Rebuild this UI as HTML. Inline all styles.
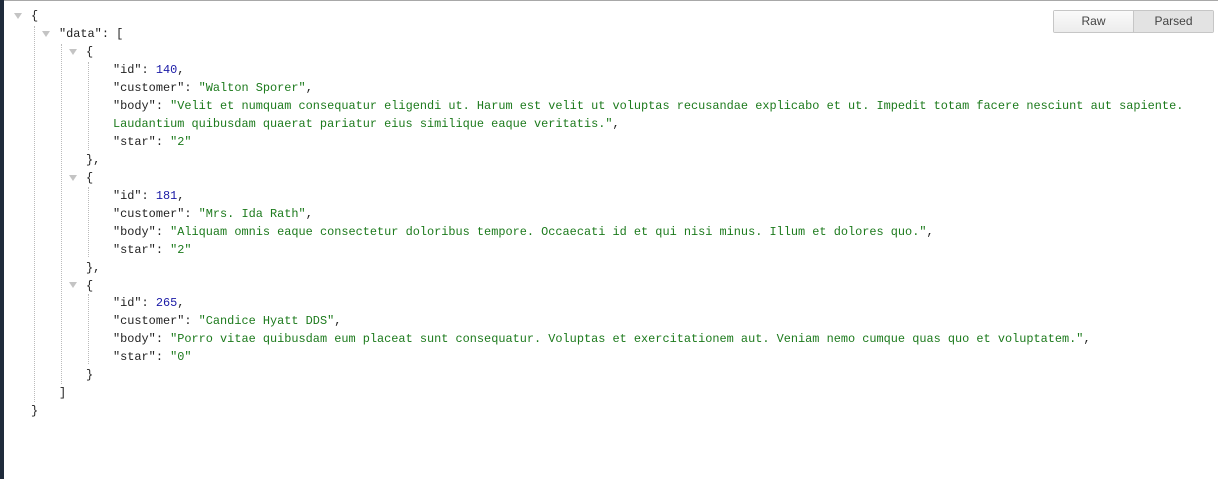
<!DOCTYPE html>
<html><head><style>
html,body{margin:0;padding:0;width:1218px;height:479px;overflow:hidden;background:#fff;position:relative}
#lb{position:absolute;left:0;top:0;width:4px;height:479px;background:#1f2b3b}
#tb{position:absolute;left:0;top:0;width:1218px;height:1px;background:#a8a8a8}
.l{position:absolute;font-family:"Liberation Mono",monospace;font-size:11.9px;color:#222;white-space:pre;line-height:18px;height:18px}
.n{color:#1a1aa6}.s{color:#1c7a1c}
.t{position:absolute;width:0;height:0;border-left:4px solid transparent;border-right:4px solid transparent;border-top:6px solid #c4c4c4}
.g{position:absolute;width:0;border-left:1px dotted #bbb}
#btn{position:absolute;left:1053px;top:10px;width:159px;height:21px;border:1px solid #c6c6c6;border-radius:2px;display:flex;font-family:"Liberation Sans",sans-serif;font-size:12px;color:#444}
#btn div{flex:1;text-align:center;line-height:21px}
#btn .a{background:linear-gradient(#fafafa,#ececec);border-right:1px solid #c6c6c6}
#btn .b{background:#e3e3e3}
</style></head><body>
<div id="tb"></div><div id="lb"></div>
<div id="btn"><div class="a">Raw</div><div class="b">Parsed</div></div>

<div class="g" style="left:34px;top:26px;height:376px"></div>
<div class="g" style="left:61px;top:44px;height:340px"></div>
<div class="g" style="left:88px;top:62px;height:88px"></div>
<div class="g" style="left:88px;top:187px;height:70px"></div>
<div class="g" style="left:88px;top:294px;height:70px"></div>

<div class="t" style="left:14px;top:13px"></div>
<div class="t" style="left:42px;top:31px"></div>
<div class="t" style="left:69px;top:49px"></div>
<div class="t" style="left:69px;top:175px"></div>
<div class="t" style="left:69px;top:282px"></div>

<div class="l" style="left:31px;top:7px">{</div>
<div class="l" style="left:59px;top:25px">"data": [</div>
<div class="l" style="left:86px;top:43px">{</div>
<div class="l" style="left:113px;top:61px">"id": <span class="n">140</span>,</div>
<div class="l" style="left:113px;top:79px">"customer": <span class="s">"Walton Sporer"</span>,</div>
<div class="l" style="left:113px;top:97px">"body": <span class="s">"Velit et numquam consequatur eligendi ut. Harum est velit ut voluptas recusandae explicabo et ut. Impedit totam facere nesciunt aut sapiente.</span></div>
<div class="l" style="left:113px;top:115px"><span class="s">Laudantium quibusdam quaerat pariatur eius similique eaque veritatis."</span>,</div>
<div class="l" style="left:113px;top:133px">"star": <span class="s">"2"</span></div>
<div class="l" style="left:86px;top:151px">},</div>
<div class="l" style="left:86px;top:169px">{</div>
<div class="l" style="left:113px;top:187px">"id": <span class="n">181</span>,</div>
<div class="l" style="left:113px;top:205px">"customer": <span class="s">"Mrs. Ida Rath"</span>,</div>
<div class="l" style="left:113px;top:223px">"body": <span class="s">"Aliquam omnis eaque consectetur doloribus tempore. Occaecati id et qui nisi minus. Illum et dolores quo."</span>,</div>
<div class="l" style="left:113px;top:241px">"star": <span class="s">"2"</span></div>
<div class="l" style="left:86px;top:259px">},</div>
<div class="l" style="left:86px;top:277px">{</div>
<div class="l" style="left:113px;top:294px">"id": <span class="n">265</span>,</div>
<div class="l" style="left:113px;top:312px">"customer": <span class="s">"Candice Hyatt DDS"</span>,</div>
<div class="l" style="left:113px;top:330px">"body": <span class="s">"Porro vitae quibusdam eum placeat sunt consequatur. Voluptas et exercitationem aut. Veniam nemo cumque quas quo et voluptatem."</span>,</div>
<div class="l" style="left:113px;top:348px">"star": <span class="s">"0"</span></div>
<div class="l" style="left:86px;top:366px">}</div>
<div class="l" style="left:59px;top:384px">]</div>
<div class="l" style="left:31px;top:402px">}</div>
</body></html>
